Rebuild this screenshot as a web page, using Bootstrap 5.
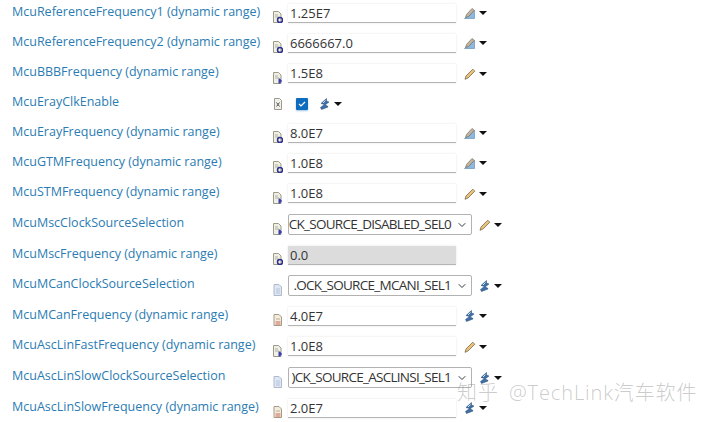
<!DOCTYPE html>
<html lang="en">
<head>
    <meta charset="UTF-8">
    <meta name="viewport" content="width=device-width, initial-scale=1.0">
    <title>Mcu Clock Settings</title>
    <link href="https://cdn.jsdelivr.net/npm/bootstrap@5.3.0/dist/css/bootstrap.min.css" rel="stylesheet">
    <style>
        html, body { height: 422px; overflow: hidden; background: #fff; }
        body { font-family: "Open Sans", "Liberation Sans", sans-serif; position: relative; }
        .prop-list { margin-top: -2px; }
        .prop-row { height: 30px; }
        .prop-row.h29 { height: 29px; }
        .prop-row.h31 { height: 31px; }
        .prop-label { width: 273px; padding-left: 12px; padding-bottom: 2px; font-size: 12.5px; color: #2b7cb3; white-space: nowrap; }
        .type-ico { width: 10px; height: 12px; margin-right: 5px; margin-top: 8px; flex: none; }
        .type-ico.level { margin-top: 0; }
        .val-box.form-control { width: 168px; height: 19px; min-height: 0; padding: 0 1px 0 2px; font-size: 13px; line-height: 18px; color: #333;
            border: 0; border-bottom: 1px solid #b4b4b4; border-radius: 0; box-shadow: 0 0 2px #e4e4e4; font-family: "Open Sans", sans-serif; }
        .val-box.form-control:disabled { background: #dcdcdc; }
        .combo-box.form-select { width: 184px; height: 21px; padding: 0 20px 0 0; font-size: 13.5px; line-height: 19px; letter-spacing: -.72px; color: #333; border: 1px solid #b2b2b2;
            border-radius: 2px; display: flex; justify-content: flex-end; overflow: hidden; white-space: nowrap; background-size: 8px 8px; background-position: right 5px center; }
        .act-ico { width: 12px; height: 12px; margin-left: 7px; flex: none; }
        .act-gap { margin-left: 8px; }
        .act-tick { margin-left: 11px; }
        .menu-caret { width: 0; height: 0; margin-left: 3px; border-left: 4px solid transparent; border-right: 4px solid transparent; border-top: 4px solid #111; flex: none; }
        .tick-box { width: 12px; height: 12px; margin-left: 8px; background: #0d6cbd; border-radius: 1px; flex: none; display: flex; box-shadow: 0 1px 2px #9cc4e4; }
        .watermark { position: absolute; left: 457px; top: 379px; font-size: 20px; line-height: 28px; letter-spacing: .9px; word-spacing: 4px; color: rgba(130,130,130,.42); font-family: "Open Sans", "Noto Sans CJK SC", sans-serif; font-weight: 300; white-space: nowrap; }
    </style>
</head>
<body>
    <svg width="0" height="0" class="position-absolute">
        <symbol id="doc-c" viewBox="0 0 10 12">
            <path d="M.5.5h5l2.500 2.500v8.500h-7.500z" fill="#f2efe2" stroke="#9a9a8a"/>
            <path d="M2 4h3M2 6h4" stroke="#a9b2a0"/>
            <circle cx="7" cy="9" r="2.500" fill="none" stroke="#2b2f8f" stroke-width="1.500"/>
        </symbol>
        <symbol id="doc-d" viewBox="0 0 10 12">
            <path d="M.5.5h5l2.500 2.500v8.500h-7.500z" fill="#f2efe2" stroke="#9a9a8a"/>
            <path d="M2 4h3M2 6h4" stroke="#a9b2a0"/>
            <path d="M5.500 6.500h1.500l2 2.500-2 2.500h-1.500z" fill="#3a3fb0"/>
        </symbol>
        <symbol id="doc-x" viewBox="0 0 10 12">
            <path d="M1.500.5h5l2 2v9h-7z" fill="#f1f1ea" stroke="#9a9a90"/>
            <path d="M3.500 4.500l3 4m0-4l-3 4" stroke="#555" fill="none"/>
        </symbol>
        <symbol id="doc-blue" viewBox="0 0 10 12">
            <path d="M1 .5h5l2.500 2.500v8.500h-7.500z" fill="#dfe6f4" stroke="#b0b8cc"/>
            <path d="M3 5h4M3 7h4M3 9h4" stroke="#b9c4dc"/>
        </symbol>
        <symbol id="doc-red" viewBox="0 0 10 12">
            <path d="M1 .5h5l2.500 2.500v8.500h-7.500z" fill="#f4eddc" stroke="#a59a84"/>
            <path d="M3 5h4" stroke="#b9ae98"/>
            <path d="M2.500 8h5M2.500 10h5" stroke="#c9695c"/>
        </symbol>
        <symbol id="ruler-pen" viewBox="0 0 12 12">
            <path d="M.5 11.500 10.500 3.500v8z" fill="#8bb8de" stroke="#6b93b6" stroke-width=".7"/>
            <path d="M1.500 10.500 2.500 7.500 8 1.500l2.300 1.800-5.500 6z" fill="#c4b69c" stroke="#6f6f66" stroke-width=".7"/>
        </symbol>
        <symbol id="pencil" viewBox="0 0 12 12">
            <path d="M1 11.300 2 8 8.800 1.200l2 2L4 10z" fill="#e9c27a" stroke="#7d6a4a" stroke-width=".8"/>
        </symbol>
        <symbol id="wand" viewBox="0 0 12 12">
            <path d="M7.500 .5 2 5.500l3.500 1L1.500 9.500l1 2 6.500-2.500-.5-1L6 7l4-3-2.500-1z" fill="#3d6fa8" stroke="#25466f" stroke-width=".5"/>
            <path d="M6.500 2.500 4 5" stroke="#d5e4f4"/>
        </symbol>
    </svg>

    <div class="prop-list">
        <div class="prop-row d-flex align-items-center">
            <div class="prop-label">McuReferenceFrequency1 (dynamic range)</div>
            <svg class="type-ico"><use href="#doc-c"/></svg>
            <input class="form-control val-box" value="1.25E7">
            <svg class="act-ico act-gap"><use href="#ruler-pen"/></svg><span class="menu-caret"></span>
        </div>
        <div class="prop-row d-flex align-items-center">
            <div class="prop-label">McuReferenceFrequency2 (dynamic range)</div>
            <svg class="type-ico"><use href="#doc-c"/></svg>
            <input class="form-control val-box" value="6666667.0">
            <svg class="act-ico act-gap"><use href="#ruler-pen"/></svg><span class="menu-caret"></span>
        </div>
        <div class="prop-row h31 d-flex align-items-center">
            <div class="prop-label">McuBBBFrequency (dynamic range)</div>
            <svg class="type-ico"><use href="#doc-d"/></svg>
            <input class="form-control val-box" value="1.5E8">
            <svg class="act-ico act-gap"><use href="#pencil"/></svg><span class="menu-caret"></span>
        </div>
        <div class="prop-row h29 d-flex align-items-center">
            <div class="prop-label">McuErayClkEnable</div>
            <svg class="type-ico level"><use href="#doc-x"/></svg>
            <span class="tick-box"><svg width="12" height="12" viewBox="0 0 12 12"><path d="M3 6l2 2 4-4" fill="none" stroke="#fff" stroke-width="1.200"/></svg></span>
            <svg class="act-ico act-tick"><use href="#wand"/></svg><span class="menu-caret"></span>
        </div>
        <div class="prop-row d-flex align-items-center">
            <div class="prop-label">McuErayFrequency (dynamic range)</div>
            <svg class="type-ico"><use href="#doc-c"/></svg>
            <input class="form-control val-box" value="8.0E7">
            <svg class="act-ico act-gap"><use href="#ruler-pen"/></svg><span class="menu-caret"></span>
        </div>
        <div class="prop-row d-flex align-items-center">
            <div class="prop-label">McuGTMFrequency (dynamic range)</div>
            <svg class="type-ico"><use href="#doc-c"/></svg>
            <input class="form-control val-box" value="1.0E8">
            <svg class="act-ico act-gap"><use href="#ruler-pen"/></svg><span class="menu-caret"></span>
        </div>
        <div class="prop-row h31 d-flex align-items-center">
            <div class="prop-label">McuSTMFrequency (dynamic range)</div>
            <svg class="type-ico"><use href="#doc-d"/></svg>
            <input class="form-control val-box" value="1.0E8">
            <svg class="act-ico act-gap"><use href="#pencil"/></svg><span class="menu-caret"></span>
        </div>
        <div class="prop-row h31 d-flex align-items-center">
            <div class="prop-label">McuMscClockSourceSelection</div>
            <svg class="type-ico"><use href="#doc-d"/></svg>
            <div class="form-select combo-box">CK_SOURCE_DISABLED_SEL0</div>
            <svg class="act-ico"><use href="#pencil"/></svg><span class="menu-caret"></span>
        </div>
        <div class="prop-row d-flex align-items-center">
            <div class="prop-label">McuMscFrequency (dynamic range)</div>
            <svg class="type-ico"><use href="#doc-c"/></svg>
            <input class="form-control val-box" value="0.0" disabled>
        </div>
        <div class="prop-row h31 d-flex align-items-center">
            <div class="prop-label">McuMCanClockSourceSelection</div>
            <svg class="type-ico"><use href="#doc-blue"/></svg>
            <div class="form-select combo-box">.OCK_SOURCE_MCANI_SEL1</div>
            <svg class="act-ico"><use href="#wand"/></svg><span class="menu-caret"></span>
        </div>
        <div class="prop-row d-flex align-items-center">
            <div class="prop-label">McuMCanFrequency (dynamic range)</div>
            <svg class="type-ico"><use href="#doc-red"/></svg>
            <input class="form-control val-box" value="4.0E7">
            <svg class="act-ico act-gap"><use href="#wand"/></svg><span class="menu-caret"></span>
        </div>
        <div class="prop-row h31 d-flex align-items-center">
            <div class="prop-label">McuAscLinFastFrequency (dynamic range)</div>
            <svg class="type-ico"><use href="#doc-d"/></svg>
            <input class="form-control val-box" value="1.0E8">
            <svg class="act-ico act-gap"><use href="#pencil"/></svg><span class="menu-caret"></span>
        </div>
        <div class="prop-row h31 d-flex align-items-center">
            <div class="prop-label">McuAscLinSlowClockSourceSelection</div>
            <svg class="type-ico"><use href="#doc-blue"/></svg>
            <div class="form-select combo-box">)CK_SOURCE_ASCLINSI_SEL1</div>
            <svg class="act-ico"><use href="#wand"/></svg><span class="menu-caret"></span>
        </div>
        <div class="prop-row d-flex align-items-center">
            <div class="prop-label">McuAscLinSlowFrequency (dynamic range)</div>
            <svg class="type-ico"><use href="#doc-red"/></svg>
            <input class="form-control val-box" value="2.0E7">
            <svg class="act-ico act-gap"><use href="#wand"/></svg><span class="menu-caret"></span>
        </div>
    </div>
    <div class="watermark">知乎 @TechLink汽车软件</div>
    <script src="https://cdn.jsdelivr.net/npm/bootstrap@5.3.0/dist/js/bootstrap.bundle.min.js"></script>
</body>
</html>
